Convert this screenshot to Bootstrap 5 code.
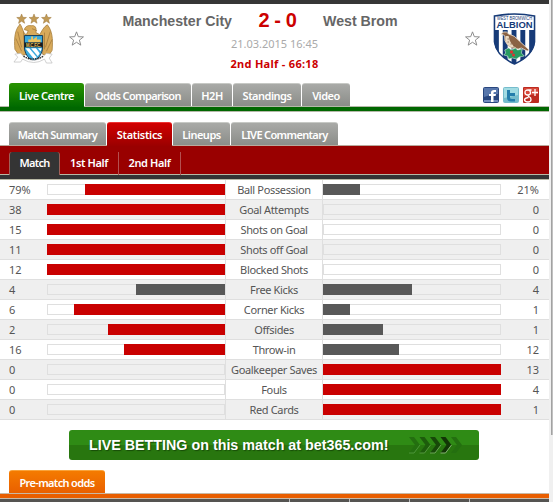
<!DOCTYPE html>
<html lang="en">
<head>
  <meta charset="UTF-8" />
  <meta name="viewport" content="width=device-width, initial-scale=1.0"/>
  <title>Manchester City - West Brom</title>
  <link
    href="https://cdn.jsdelivr.net/npm/bootstrap@5.3.0/dist/css/bootstrap.min.css"
    rel="stylesheet"
  />
  <style>
    body { font: 11px/14px "Noto Sans", "Open Sans", sans-serif; color: #555; height: 502px; overflow: hidden; }
    .page { width: 549px; height: 502px; overflow: hidden; }
    .scroll-track { width: 4px; height: 502px; background: #f0f0f0; padding-left: 2px; }
    .scroll-thumb { height: 435px; background: #c1c1c1; border-left: 1px solid #a2a2a2; }

    .match-head { height: 83px; border-top: 4px solid #363636; padding: 9px 0 0 13px; }
    .match-head > div { flex: none; }
    .crest-box { width: 41px; }
    .crest-box.away { width: 43px; margin-left: 13px; }
    .fav { width: 15px; margin-top: 18px; }
    .fav.home { margin-left: 15px; }
    .match-info { width: 381px; }
    .team { font: bold 14.2px/16px "Liberation Sans", Arial, sans-serif; color: #666; white-space: nowrap; }
    .score { font: bold 20px/20px "Liberation Sans", Arial, sans-serif; color: #c00; white-space: nowrap; letter-spacing: -.4px; margin-top: -3px; }
    .teams { display: grid; grid-template-columns: 148px 91px 142px; height: 23px; }
    .date { color: #aaa; line-height: 16px; }
    .period { color: #c00; font-weight: bold; line-height: 16px; margin-top: 4px; letter-spacing: .3px; }

    .tabs { height: 23px; padding-left: 9px; gap: 1px; }
    .tab { height: 23px; line-height: 22px; padding: 1px 0 0; text-align: center; white-space: nowrap; color: #fff; font-size: 11px; font-weight: 600; letter-spacing: -.5px; border-radius: 3px 3px 0 0; background: linear-gradient(#a9aaa7, #8b8d89); border-top: 1px solid #c7c9c5; }
    .w-odds, .w-summary, .w-comm, .orange { letter-spacing: -.65px; }
    .tab.green { height: 24px; background: linear-gradient(#289200, #006a00); border-top-color: #279000; }
    .tab.red { height: 24px; background: linear-gradient(#d20000, #9b0000); border-top-color: #e33; letter-spacing: -.3px; }
    .green-line { height: 6px; background: #006700; border: solid #b5b9a9; border-width: 1px 0; }
    .w-live { width: 75px; } .w-odds { width: 106px; } .w-h2h { width: 40px; }
    .w-stand { width: 68px; } .w-video { width: 48px; }
    .w-summary { width: 97px; } .w-stats { width: 65px; } .w-lineups { width: 57px; } .w-comm { width: 107px; }
    .social { gap: 4px; margin: 4px 10px 0 auto; }
    .social svg, .fav svg { display: block; }

    .halves { height: 29px; background: #900; border-top: 1px solid #b9a99c; padding: 6px 0 0 9px; }
    .half { height: 23px; line-height: 22px; color: #fff; font-weight: 600; letter-spacing: -.4px; text-align: center; border-right: 1px solid #b45050; }
    .half.on { width: 51px; background: #343434; border: 1px solid #a06058; border-width: 0 1px; border-radius: 3px 3px 0 0; letter-spacing: -.7px; }
    .half-1 { width: 59px; } .half-2 { width: 62px; }
    .dark-line { height: 6px; background: #343434; border: solid #b9b9a5; border-width: 1px 0; }
    .second-tabs { margin-top: 10px; }

    .stat { display: grid; grid-template-columns: 47px 178px 98px 178px 48px; height: 20px; border-bottom: 1px solid #dfdfdf; line-height: 19px; }
    .stat:nth-child(even) { background: #efefef; }
    .stat-name { text-align: center; border: solid #dfdfdf; border-width: 0 1px; white-space: nowrap; letter-spacing: -.35px; }
    .home-val { padding-left: 9px; }
    .away-val { padding-right: 10px; text-align: right; }
    .meter { height: 11px; margin-top: 4px; box-shadow: inset 0 0 0 1px #dfdfdf; }
    .meter div { height: 11px; background: #585858; }
    .meter .lead-bar { background: #c90000; }

    .bet { width: 410px; height: 30px; margin: 10px 0 0 69px; padding: 0 16px 0 20px; border-radius: 3px; background: linear-gradient(#2f8b15 50%, #28760f 50%); color: #fff; font: bold 14.3px/30px "Liberation Sans", Arial, sans-serif; text-shadow: 1px 1px 1px #174c08; white-space: nowrap; }
    .odds-tabs { margin-top: 10px; padding-left: 9px; height: 23px; }
    .tab.orange { width: 96px; height: 24px; background: linear-gradient(#f47b00, #e95e00); border-top-color: #f9a33b; }
    .orange-line { height: 6px; background: #e95e00; border: solid #c9b9a5; border-width: 1px 0; }
    .odds-head { height: 3px; background: #555451; padding-left: 289px; }
    .odds-head div { width: 60px; border-left: 1px solid #bbb; }
  </style>
</head>
<body class="d-flex bg-white">
  <main class="page">
    <header class="match-head d-flex">
      <div class="crest-box">
        <svg width="42" height="51" viewBox="0 0 44 52" preserveAspectRatio="none">
          <g fill="#c19a55" stroke="#9b763a" stroke-width=".5">
            <path id="goldStar" d="M9 1l1.400 3.400 3.700.2-2.900 2.300 1 3.600L9 8.400l-3.200 2.100 1-3.600-2.900-2.300 3.700-.2z"/>
            <use href="#goldStar" x="13"/>
            <use href="#goldStar" x="26"/>
          </g>
          <path d="M7 12C2 17 1 26 2 37l5 7 7-2V23h17v19l6 2 4-6c1-12 0-20-5-26-4 2-6 7-8 10l-4-2c1-5-1-8-5-7-4-1-7 2-7 4l4 1-2 4-2-1c-2-4-3-8-5-10z" fill="#d8aa5b" stroke="#a67d3c" stroke-width=".8"/>
          <path d="M5 19l4 16M3 26l6 13M11 19l1 16M39 19l-5 16M41 27l-6 12M33 20v17M20 16l5 2" stroke="#a37a3c" stroke-width=".8" fill="none"/>
          <path d="M12 23h19v14q-2 9-9.500 12Q14 46 12 37z" fill="#38a9dd" stroke="#173955"/>
          <path d="M16 30v-3h3v-3h2v3l4-3v3h4v3z" fill="#ecc45f"/>
          <path d="M13 36l9 11 3-2-8-9zM19 36l7 8 2-3-4-5zM26 36l3 3 1-3z" fill="#fff"/>
          <path d="M12 30h19v5H12z" fill="#191919"/>
          <text x="13.500" y="34.300" textLength="16" font-family="Liberation Sans" font-size="4.500" font-weight="bold" fill="#e6c45f">M.C.F.C.</text>
          <path d="M8 41l-6 1 3 3-4 5h7l2-3q12 7 23 0l2 4h6l-3-5 3-4-6-1-3 3q-10 8-20 1z" fill="#fff" stroke="#bbb" stroke-width=".7"/>
          <path d="M11 44q10 6 21 0" fill="none" stroke="#333" stroke-width="1.500" stroke-dasharray="1.500 1"/>
        </svg>
      </div>
      <div class="fav home">
        <svg width="15" height="15" viewBox="0 0 14 14"><path d="M7 .8l1.700 4.500 4.800.2-3.800 3 1.300 4.700-4-2.700-4 2.700 1.300-4.700-3.800-3 4.800-.2z" fill="#fff" stroke="#888" stroke-width=".9"/></svg>
      </div>
      <div class="match-info">
        <div class="teams">
          <div class="team text-end">Manchester City</div>
          <div class="score text-center">2 - 0</div>
          <div class="team">West Brom</div>
        </div>
        <div class="date text-center">21.03.2015 16:45</div>
        <div class="period text-center">2nd Half - 66:18</div>
      </div>
      <div class="fav">
        <svg width="15" height="15" viewBox="0 0 14 14"><path d="M7 .8l1.700 4.500 4.800.2-3.800 3 1.300 4.700-4-2.700-4 2.700 1.300-4.700-3.800-3 4.800-.2z" fill="#fff" stroke="#888" stroke-width=".9"/></svg>
      </div>
      <div class="crest-box away">
        <svg width="43" height="52" viewBox="0 0 44 52" preserveAspectRatio="none">
          <defs><clipPath id="wba"><path d="M1 3Q22-1 43 3v26q-2 14-21 22Q3 43 1 29z"/></clipPath></defs>
          <g clip-path="url(#wba)">
            <path d="M0 0h44v52H0z" fill="#fff"/>
            <path d="M1 17h5v34H1zm9 0h5v34h-5zm9 0h5v34h-5zm9 0h5v34h-5zm9 0h6v34h-6z" fill="#173b78"/>
          </g>
          <path d="M1.500 3Q22-1 42.500 3v26q-2 14-20.500 22Q3.500 43 1.500 29z" fill="none" stroke="#173b78" stroke-width="1.600"/>
          <text x="4" y="6.600" textLength="36" lengthAdjust="spacingAndGlyphs" font-family="Liberation Sans" font-size="4.500" fill="#173b78">WEST BROMWICH</text>
          <text x="3.500" y="15.300" textLength="37" lengthAdjust="spacingAndGlyphs" font-family="Liberation Sans" font-size="9" font-weight="bold" fill="#173b78">ALBION</text>
          <path d="M8 21l3-2q3-1 5 2 6 1 11 7l10 9-2 1-6-3-3 1q-8 0-11-4-4-4-3-9l-1-1z" fill="#8a6244" stroke="#f5eadb" stroke-width=".8"/>
          <path d="M13 23q-2 7 5 11l6 1q-7-4-8-12z" fill="#ead8c0"/>
          <path d="M15 26h1m-1 3h1m2 2h1m2 2h1" stroke="#68442c"/>
          <path d="M12 37l4-2 3 2 4-2 2 2 5-1-1 4 3 3-5 1-3 2-4-1-4 1-1-3-4-1 2-2z" fill="#289b61" stroke="#d3eee0" stroke-width=".6"/>
          <circle cx="19" cy="39" r="1.700" fill="#d33"/><circle cx="21" cy="42" r="1.500" fill="#d33"/>
        </svg>
      </div>
    </header>

    <nav class="tabs d-flex">
      <div class="tab green w-live">Live Centre</div>
      <div class="tab w-odds">Odds Comparison</div>
      <div class="tab w-h2h">H2H</div>
      <div class="tab w-stand">Standings</div>
      <div class="tab w-video">Video</div>
      <div class="social d-flex">
        <svg width="16" height="16" viewBox="0 0 16 16"><rect width="16" height="16" rx="2" fill="#29477f"/><path d="M1 1h14v6Q8 7 1 10z" fill="#5877ac"/><path d="M1 13h14v2H1z" fill="#718cbc"/><path d="M8 15V9H6V7h2V5.500Q8 3 11 3h2v2h-1.500Q10.500 5 10.500 6v1H13l-.4 2h-2.100v6z" fill="#fff"/></svg>
        <svg width="16" height="16" viewBox="0 0 16 16"><rect width="16" height="16" rx="2" fill="#75bccc"/><path d="M1 1h14v7L1 11z" fill="#a2dce3"/><path d="M4 3h3v3h5v3H7v1.500q0 1.500 2 1.500h3v2.500H8q-4 0-4-4z" fill="#247eac"/></svg>
        <svg width="16" height="16" viewBox="0 0 16 16"><rect width="16" height="16" rx="1" fill="#bd2b20"/><path d="M1 1h14v6L1 9z" fill="#d7493b"/><path d="M8.500 3H5Q2 3 2 5.500T5 8q2.500 0 2.500-2.500Q7.500 3.500 5.500 3M5 8q0 1.500 1.500 2T8 12.500Q8 15 5 15t-3.500-2q0-2 4-2.500M12 2v7M9 5.500h6" fill="none" stroke="#fff" stroke-width="1.300"/></svg>
      </div>
    </nav>
    <div class="green-line"></div>

    <nav class="tabs second-tabs d-flex">
      <div class="tab w-summary">Match Summary</div>
      <div class="tab red w-stats">Statistics</div>
      <div class="tab w-lineups">Lineups</div>
      <div class="tab w-comm">LIVE Commentary</div>
    </nav>
    <nav class="halves d-flex">
      <div class="half on">Match</div>
      <div class="half half-1">1st Half</div>
      <div class="half half-2">2nd Half</div>
    </nav>
    <div class="dark-line"></div>

    <section id="stats"></section>

    <div class="bet d-flex align-items-center justify-content-between">
      <span>LIVE BETTING on this match at bet365.com!</span>
      <svg width="54" height="18" viewBox="0 0 54 18">
        <path id="chev" d="M0 1h5l6 8-6 8H0l6-8z" fill="#246f10"/>
        <path d="M0 17h5l6-8" fill="none" stroke="#4c9639"/>
        <g transform="translate(10.500)"><path d="M0 1h5l6 8-6 8H0l6-8z" fill="#1d5c0c"/><path d="M0 17h5l6-8" fill="none" stroke="#55983f"/></g>
        <g transform="translate(21)"><path d="M0 1h5l6 8-6 8H0l6-8z" fill="#174909"/><path d="M0 17h5l6-8" fill="none" stroke="#6ba657"/></g>
        <g transform="translate(31.500)"><path d="M0 1h5l6 8-6 8H0l6-8z" fill="#123506"/><path d="M0 17h5l6-8" fill="none" stroke="#84b472"/></g>
        <use href="#chev" x="42"/>
      </svg>
    </div>

    <div class="odds-tabs"><div class="tab orange">Pre-match odds</div></div>
    <div class="orange-line"></div>
    <div class="odds-head d-flex"><div></div><div></div><div></div><div></div></div>
  </main>
  <aside class="scroll-track"><div class="scroll-thumb"></div></aside>

  <script src="https://cdn.jsdelivr.net/npm/bootstrap@5.3.0/dist/js/bootstrap.bundle.min.js"></script>
  <script>
    // name, home value, away value, home bar px, away bar px
    const stats = [
      ["Ball Possession", "79%", "21%", 140, 37],
      ["Goal Attempts", "38", "0", 178, 0],
      ["Shots on Goal", "15", "0", 178, 0],
      ["Shots off Goal", "11", "0", 178, 0],
      ["Blocked Shots", "12", "0", 178, 0],
      ["Free Kicks", "4", "4", 89, 89],
      ["Corner Kicks", "6", "1", 151, 27],
      ["Offsides", "2", "1", 117, 60],
      ["Throw-in", "16", "12", 101, 76],
      ["Goalkeeper Saves", "0", "13", 0, 178],
      ["Fouls", "0", "4", 0, 178],
      ["Red Cards", "0", "1", 0, 178]
    ];

    document.getElementById("stats").innerHTML = stats.map(([name, home, away, hw, aw]) => `
      <div class="stat">
        <div class="home-val">${home}</div>
        <div class="meter"><div class="ms-auto ${hw > aw ? "lead-bar" : ""}" style="width: ${hw}px"></div></div>
        <div class="stat-name">${name}</div>
        <div class="meter"><div class="${aw > hw ? "lead-bar" : ""}" style="width: ${aw}px"></div></div>
        <div class="away-val">${away}</div>
      </div>
    `).join("");
  </script>
</body>
</html>
